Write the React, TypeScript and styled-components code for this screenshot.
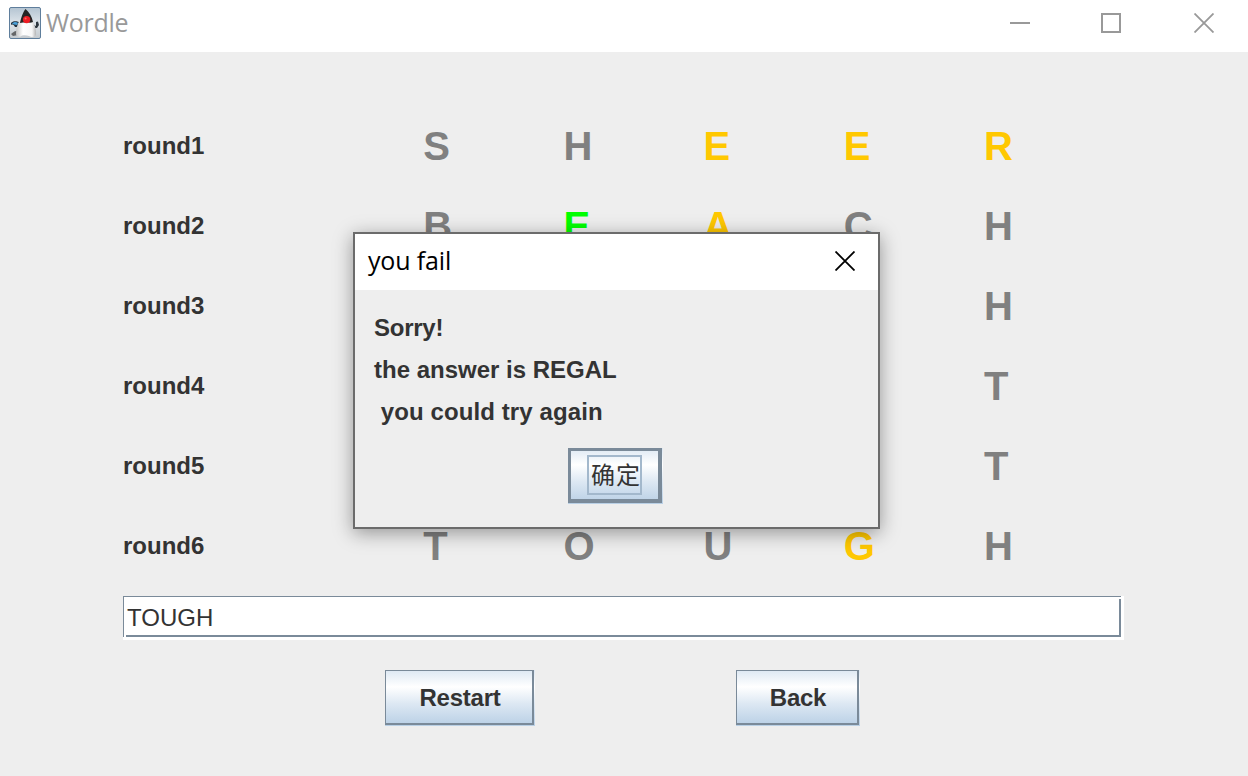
import React from "react";
import styled, { createGlobalStyle } from "styled-components";

const GlobalStyle = createGlobalStyle`
  * { box-sizing: border-box; }
  body { margin: 0; background: #eeeeee; font-family: "Liberation Sans", Arial, sans-serif; color: #333333; }
  button { font-family: inherit; color: inherit; }
`;

const Window = styled.div`
  position: relative;
  width: 1248px;
  height: 776px;
  overflow: hidden;
  background: #eeeeee;
  display: flex;
  flex-direction: column;
`;

const TitleBar = styled.header`
  flex: none;
  height: 52px;
  padding: 0 34px 6px 9px;
  background: #ffffff;
  display: flex;
  align-items: center;
`;

const Title = styled.span<{ $active?: boolean }>`
  flex: 1;
  padding-bottom: 2px;
  font-family: "Open Sans", "Noto Sans", sans-serif;
  font-size: 25px;
  line-height: 34px;
  white-space: pre;
  letter-spacing: ${(p) => (p.$active ? "-0.15px" : "-0.3px")};
  color: ${(p) => (p.$active ? "#000000" : "#999999")};
`;

const AppIcon = styled.svg`
  margin-right: 5px;
`;

const Controls = styled.div`
  display: flex;
`;

const Control = styled.svg<{ $after: number }>`
  margin-right: ${(p) => p.$after}px;
`;

const Board = styled.main`
  padding: 54px 124px 0 123px;
  display: flex;
  flex-direction: column;
`;

const Row = styled.div`
  display: grid;
  grid-template-columns: 300.2px repeat(5, 140.2px);
  height: 80px;
  align-items: center;
`;

const Label = styled.span`
  font-size: 24px;
  font-weight: bold;
`;

const colors = { miss: "#808080", near: "#ffc800", hit: "#00ff00" };
type Mark = keyof typeof colors;

const Letter = styled.span<{ $mark: Mark }>`
  font-size: 40px;
  font-weight: bold;
  color: ${(p) => colors[p.$mark]};
`;

const line = "linear-gradient(#7a8a99, #7a8a99)";
const Field = styled.div`
  height: 44px;
  margin-top: 10px;
  padding: 0 4px;
  font-size: 24px;
  line-height: 43px;
  background:
    ${line} 0 0 / 998px 1px no-repeat,
    ${line} 0 0 / 1px 41px no-repeat,
    ${line} 3px 39px / 995px 2px no-repeat,
    ${line} 996px 3px / 2px 38px no-repeat,
    #ffffff;
`;

const Buttons = styled.div`
  display: flex;
  gap: 201px;
  margin: 30px 0 0 262px;
`;

const MetalButton = styled.button<{ $width: number }>`
  width: ${(p) => p.$width}px;
  height: 56px;
  padding: 0 1px 1px 0;
  border: 0;
  background: linear-gradient(#dde8f3 0%, #ffffff 30%, #dde8f3 60%, #b8cfe5 100%);
  display: flex;
  font-size: 24px;
  font-weight: bold;
  letter-spacing: -0.25px;
`;

const Bevel = styled.span<{ $primary?: boolean }>`
  flex: 1;
  align-self: stretch;
  display: flex;
  align-items: center;
  justify-content: center;
  border: solid #7a8a99;
  border-width: ${(p) => (p.$primary ? "3px 4px 4px 3px" : "1px 2px 2px 1px")};
  padding: ${(p) => (p.$primary ? "0" : "2px 0 0 2px")};
`;

const Focus = styled.span`
  width: 55px;
  height: 40px;
  border: 2px solid #a3b8cc;
  font-family: "Noto Sans CJK SC", sans-serif;
  font-weight: 400;
  font-size: 24px;
  line-height: 34px;
  letter-spacing: 1px;
  padding-left: 2px;
  white-space: nowrap;
`;

const Dialog = styled.section`
  position: absolute;
  left: 353px;
  top: 232px;
  width: 527px;
  height: 297px;
  border: 2px solid #6b6b6b;
  background: #eeeeee;
  box-shadow: 0 4px 18px rgba(0, 0, 0, 0.38);
  display: flex;
  flex-direction: column;
`;

const DialogTitle = styled.header`
  flex: none;
  height: 56px;
  padding: 0 23px 2px 13px;
  background: #ffffff;
  display: flex;
  align-items: center;
`;

const Message = styled.div`
  padding: 17px 0 0 19px;
  display: flex;
  flex-direction: column;
`;

const MessageLine = styled.span<{ $spacing?: number }>`
  font-size: 24px;
  font-weight: bold;
  line-height: 42px;
  white-space: pre;
  letter-spacing: ${(p) => p.$spacing ?? 0}px;
`;

const DialogActions = styled.div`
  display: flex;
  padding: 15px 0 0 213px;
`;

const rounds: [string, Mark[]][] = [
  ["SHEER", ["miss", "miss", "near", "near", "near"]],
  ["BEACH", ["miss", "hit", "near", "miss", "miss"]],
  ["    H", ["miss", "miss", "miss", "miss", "miss"]],
  ["    T", ["miss", "miss", "miss", "miss", "miss"]],
  ["    T", ["miss", "miss", "miss", "miss", "miss"]],
  ["TOUGH", ["miss", "miss", "miss", "near", "miss"]],
];

const Cross = ({ color }: { color: string }) => (
  <svg width="20" height="20" viewBox="0 0 20 20">
    <path d="M0.5 0.5L19.5 19.5M19.5 0.5L0.5 19.5" stroke={color} strokeWidth="1.8" />
  </svg>
);

const Duke = () => (
  <AppIcon width="32" height="32" viewBox="0 0 32 32">
    <defs>
      <linearGradient id="sky" x1="0" y1="0" x2="0" y2="1">
        <stop offset="0" stopColor="#b4c4d2" />
        <stop offset="0.5" stopColor="#dde4ea" />
        <stop offset="1" stopColor="#c4c9cd" />
      </linearGradient>
      <linearGradient id="body" x1="0" y1="0" x2="1" y2="0">
        <stop offset="0" stopColor="#c4c4c4" />
        <stop offset="0.35" stopColor="#ffffff" />
        <stop offset="0.8" stopColor="#f6f6f6" />
        <stop offset="1" stopColor="#b4b4b4" />
      </linearGradient>
    </defs>
    <rect x="0.5" y="0.5" width="31" height="31" rx="1.5" fill="url(#sky)" stroke="#5f7e9c" />
    <path d="M2 27C5 24 8 23 10 24L9 28L4 29Z" fill="#4c4c4c" opacity="0.8" />
    <path d="M2 16C4 13.5 8 13.5 12 16L9 20L6 20C5 18 4 17 2 18Z" fill="#22303c" />
    <path d="M3 16.5C5 14.5 7 14.5 9 16L8 18L5 17.5Z" fill="#4a9fd6" />
    <path d="M25 18L27 19L27 15L29 14.5L30 18L28 21L25 21Z" fill="#2c363e" />
    <path d="M11 13C8 17 7 22 7 27C7 30 11 30.5 13 28.5C15 28 18 28 20 29C23 31 27 30 27 27C27 22 26 17 23 13Z" fill="url(#body)" />
    <path d="M16.5 2C20 5 23 9.5 24 15C22 16 20 15.5 18 15.5C15 15.5 13 15.5 11 16C12 11 14 5 16.5 2Z" fill="#252525" />
    <circle cx="17.6" cy="12.6" r="3.7" fill="#ed1c24" />
    <circle cx="16.6" cy="11.4" r="1" fill="#ff6a62" />
  </AppIcon>
);

export default function App() {
  return (
    <Window>
      <GlobalStyle />
      <TitleBar>
        <Duke />
        <Title>Wordle</Title>
        <Controls>
          <Control $after={71} width="20" height="20" viewBox="0 0 20 20">
            <path d="M0 10H20" stroke="#999999" strokeWidth="2" />
          </Control>
          <Control $after={73} width="20" height="20" viewBox="0 0 20 20">
            <rect x="0" y="0" width="20" height="20" fill="none" stroke="#999999" strokeWidth="4" />
          </Control>
          <Cross color="#999999" />
        </Controls>
      </TitleBar>
      <Board>
        {rounds.map(([word, marks], i) => (
          <Row key={i}>
            <Label>round{i + 1}</Label>
            {marks.map((mark, j) => (
              <Letter key={j} $mark={mark}>{word[j]}</Letter>
            ))}
          </Row>
        ))}
        <Field>TOUGH</Field>
        <Buttons>
          <MetalButton $width={150}><Bevel>Restart</Bevel></MetalButton>
          <MetalButton $width={124}><Bevel>Back</Bevel></MetalButton>
        </Buttons>
      </Board>
      <Dialog>
        <DialogTitle>
          <Title $active>you fail</Title>
          <Cross color="#000000" />
        </DialogTitle>
        <Message>
          <MessageLine $spacing={-0.25}>Sorry!</MessageLine>
          <MessageLine>the answer is REGAL</MessageLine>
          <MessageLine $spacing={0.1}> you could try again</MessageLine>
        </Message>
        <DialogActions>
          <MetalButton $width={95}>
            <Bevel $primary><Focus>确定</Focus></Bevel>
          </MetalButton>
        </DialogActions>
      </Dialog>
    </Window>
  );
}
